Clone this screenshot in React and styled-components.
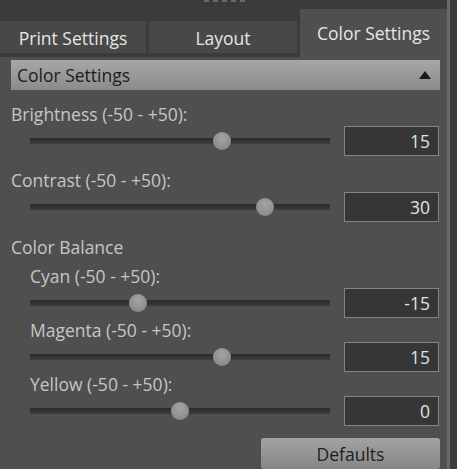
import React from 'react';
import styled, { createGlobalStyle } from 'styled-components';

const GlobalStyle = createGlobalStyle`
  html, body {
    margin: 0;
    padding: 0;
    background: #3b3b3b;
  }
  body {
    font-family: "Open Sans", "Noto Sans", sans-serif;
  }
`;

const Window = styled.div`
  display: flex;
  width: 457px;
  height: 469px;
  overflow: hidden;
  background: #3b3b3b;
`;

const Main = styled.div`
  display: flex;
  flex-direction: column;
  width: 447px;
  flex: none;
`;

const Divider = styled.div`
  width: 3px;
  background: #676767;
  flex: none;
`;

const Gutter = styled.div`
  flex: 1;
  background: #3b3b3b;
`;

const TabStrip = styled.div`
  position: relative;
  display: flex;
  align-items: flex-end;
  height: 57px;
  padding-top: 9px;
  box-sizing: border-box;
  background: #3b3b3b;
`;

const Grip = styled.div`
  position: absolute;
  top: 0;
  left: 204px;
  display: flex;
  gap: 4px;
`;

const GripDot = styled.span`
  width: 5px;
  height: 2px;
  background: #6a6a6a;
`;

const Tab = styled.div`
  display: flex;
  justify-content: center;
  align-items: flex-start;
  box-sizing: border-box;
  width: ${(p) => p.$width}px;
  height: ${(p) => (p.$active ? 48 : 32)}px;
  margin-bottom: ${(p) => (p.$active ? 0 : 4)}px;
  margin-right: ${(p) => (p.$gap || 0)}px;
  padding-top: ${(p) => (p.$active ? 12 : 5)}px;
  background: ${(p) => (p.$active ? '#4f4f4f' : '#484848')};
  color: #e6e6e6;
  font-size: 17.5px;
  line-height: 24px;
`;

const Panel = styled.div`
  flex: 1;
  display: flex;
  flex-direction: column;
  background: #4f4f4f;
  padding: 3px 7px 0 11px;
`;

const Header = styled.div`
  display: flex;
  align-items: center;
  justify-content: space-between;
  height: 30px;
  padding: 0 9px 0 6px;
  background: linear-gradient(#a7a7a7, #8b8b8b);
  color: #1c1c1c;
  font-size: 17.5px;
`;

const Arrow = styled.span`
  width: 0;
  height: 0;
  border-left: 6px solid transparent;
  border-right: 6px solid transparent;
  border-bottom: 8px solid #1a1a1a;
`;

const Label = styled.div`
  color: #c6c6c6;
  font-size: 17.5px;
  line-height: 24px;
  margin-top: ${(p) => p.$top || 0}px;
  padding-left: ${(p) => (p.$indent ? 19 : 0)}px;
`;

const Row = styled.div`
  display: flex;
  align-items: center;
  height: 30px;
  padding-left: 19px;
  gap: 14px;
`;

const Track = styled.div`
  position: relative;
  width: 300px;
  height: 6px;
  background: linear-gradient(#2a2a2a, #3d3d3d);
`;

const Thumb = styled.div`
  position: absolute;
  top: 50%;
  width: 18px;
  height: 18px;
  margin: -9px 0 0 -9px;
  border-radius: 50%;
  background: radial-gradient(circle at 50% 35%, #a4a4a4, #8c8c8c 70%, #808080);
`;

const ValueBox = styled.div`
  width: 95px;
  height: 30px;
  box-sizing: border-box;
  border: 1px solid #838383;
  background: #363636;
  color: #e2e2e2;
  font-size: 17.5px;
  line-height: 28px;
  text-align: right;
  padding-right: 8px;
`;

const Footer = styled.div`
  display: flex;
  justify-content: flex-end;
  margin-top: 12px;
`;

const Button = styled.button`
  width: 179px;
  height: 31px;
  border: none;
  border-radius: 3px;
  background: linear-gradient(#a2a2a2, #878787);
  color: #1e1e1e;
  font-family: inherit;
  font-size: 17.5px;
  padding: 0;
`;

function Slider({ value }) {
  const left = 9 + ((value + 50) / 100) * 282;
  return (
    <Row>
      <Track>
        <Thumb style={{ left }} />
      </Track>
      <ValueBox>{value}</ValueBox>
    </Row>
  );
}

export default function App() {
  return (
    <>
      <GlobalStyle />
      <Window>
        <Main>
          <TabStrip>
            <Grip>
              <GripDot />
              <GripDot />
              <GripDot />
              <GripDot />
              <GripDot />
            </Grip>
            <Tab $width={146} $gap={3}>Print Settings</Tab>
            <Tab $width={148} $gap={3}>Layout</Tab>
            <Tab $width={147} $active>Color Settings</Tab>
          </TabStrip>
          <Panel>
            <Header>
              Color Settings
              <Arrow />
            </Header>
            <Label $top={12}>Brightness (-50 - +50):</Label>
            <Slider value={15} />
            <Label $top={12}>Contrast (-50 - +50):</Label>
            <Slider value={30} />
            <Label $top={13}>Color Balance</Label>
            <Label $top={5} $indent>Cyan (-50 - +50):</Label>
            <Slider value={-15} />
            <Label $indent>Magenta (-50 - +50):</Label>
            <Slider value={15} />
            <Label $indent>Yellow (-50 - +50):</Label>
            <Slider value={0} />
            <Footer>
              <Button>Defaults</Button>
            </Footer>
          </Panel>
        </Main>
        <Divider />
        <Gutter />
      </Window>
    </>
  );
}
